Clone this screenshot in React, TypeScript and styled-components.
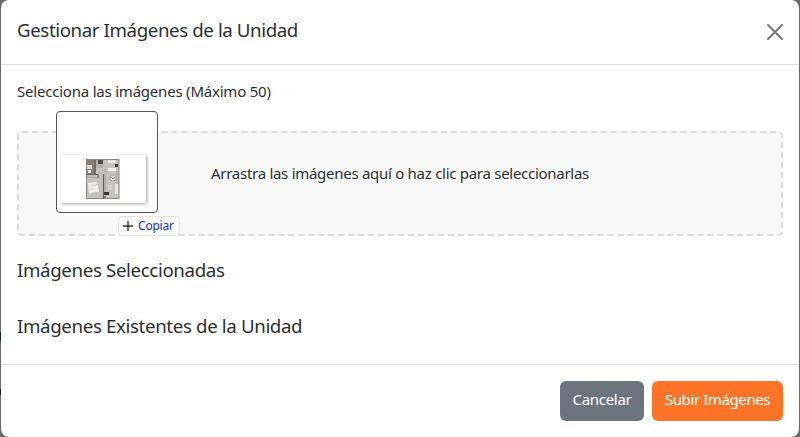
import React from "react";
import styled, { createGlobalStyle } from "styled-components";

const GlobalStyle = createGlobalStyle`
  * { box-sizing: border-box; }
  html, body { margin: 0; background: #69696b; overflow: hidden; }
  body { font-family: "Noto Sans", "Open Sans", sans-serif; color: #2b2f33; }
`;

const Backdrop = styled.div`
  width: 800px;
  height: 437px;
  padding: 0 1px;
  background:
    linear-gradient(#15262b, #15262b) 0 332px / 1px 9px no-repeat,
    linear-gradient(#1d1d1f, #1d1d1f) 0 389px / 1px 6px no-repeat,
    #69696b;
`;

const Modal = styled.section`
  display: flex;
  flex-direction: column;
  height: 437px;
  border-radius: 8px;
  background: #fff;
`;

const Header = styled.header`
  display: flex;
  align-items: center;
  justify-content: space-between;
  height: 65px;
  padding: 0 16px;
  border-bottom: 1px solid #dee2e6;
`;

const Text = styled.span<{ $size: number; $spacing?: number }>`
  font-size: ${(p) => p.$size}px;
  letter-spacing: ${(p) => p.$spacing ?? 0}px;
  line-height: 24px;
  white-space: nowrap;
`;

const Title = styled.h1`
  display: flex;
  margin: 0 0 4px;
  font-weight: 400;
`;

const CloseButton = styled.button`
  display: flex;
  padding: 0;
  border: 0;
  margin-right: -1px;
  background: none;
  color: #7a7a7a;
`;

const Body = styled.main`
  display: flex;
  flex-direction: column;
  flex: 1;
  padding: 14px 16px 0;
`;

const Label = styled.label`
  display: flex;
  height: 24px;
`;

const DropZone = styled.div`
  position: relative;
  display: flex;
  justify-content: center;
  height: 105px;
  margin-top: 28px;
  padding-top: 28px;
  border: 2px dashed #dcdcdc;
  border-radius: 5px;
  background: #f8f8f8;
`;

const DragPreview = styled.div`
  position: absolute;
  left: 37px;
  top: -22px;
  width: 102px;
  height: 102px;
  padding: 43px 0 0 4px;
  border: 1px solid #555;
  border-radius: 4px;
  background: #fff;
`;

const Thumbnail = styled.div`
  display: flex;
  width: 85px;
  height: 48px;
  padding: 4px 0 0 25px;
  background: #fff;
  box-shadow: 1px 1px 3px rgba(0, 0, 0, 0.35);
`;

const CopyHint = styled.div`
  position: absolute;
  left: 99px;
  top: 83px;
  display: flex;
  align-items: center;
  gap: 5px;
  width: 62px;
  height: 20px;
  padding-left: 4px;
  border: 1px solid #e4e4e4;
  border-radius: 4px;
  background: #fcfcfc;
  color: #1233b0;
`;

const SectionTitle = styled.h2`
  display: flex;
  margin: 22px 0 10px;
  font-weight: 400;
`;

const Footer = styled.footer`
  display: flex;
  justify-content: flex-end;
  gap: 8px;
  height: 73px;
  padding: 16px 16px 0;
  border-top: 1px solid #dee2e6;
`;

const Button = styled.button<{ $width: number; $color: string }>`
  display: flex;
  justify-content: center;
  width: ${(p) => p.$width}px;
  height: 40px;
  padding: 6px 0 0;
  border: 0;
  border-radius: 6px;
  background: ${(p) => p.$color};
  color: #fff;
  font-family: inherit;
`;

const CloseIcon = () => (
  <svg width="18" height="18" viewBox="0 0 18 18" fill="none" stroke="currentColor" strokeWidth="2" strokeLinecap="round">
    <path d="M2 2 16 16M16 2 2 16" />
  </svg>
);

const PlusIcon = () => (
  <svg width="10" height="10" viewBox="0 0 10 10" stroke="#333" strokeWidth="1.3">
    <path d="M5 0V10M0 5H10" />
  </svg>
);

const FloorPlan = () => (
  <svg width="34" height="41" viewBox="0 0 34 41">
    <rect x="0.5" y="0.5" width="32.5" height="39" fill="#c5c2be" stroke="#8b8783" />
    <rect x="1" y="1" width="9" height="14" fill="#8d7c70" />
    <rect x="1" y="6" width="5" height="4" fill="#ddd9d4" />
    <rect x="2" y="11" width="3" height="3" fill="#eceae7" />
    <rect x="10" y="1" width="7" height="8" fill="#b0afae" />
    <rect x="12" y="1" width="5" height="4" fill="#4a4c50" />
    <rect x="22" y="1" width="8" height="3" fill="#e7e6e3" />
    <rect x="22" y="9" width="8" height="3" fill="#f3f2f0" />
    <rect x="29" y="5" width="3" height="3" fill="#3a3a3b" />
    <path d="M9 1V15M1 15.5H12M12 15V19M17.5 15V40" fill="none" stroke="#66625f" strokeWidth="1.2" />
    <path d="M1 18 12 19M19 10V36M31 12V34" fill="none" stroke="#aaa6a1" />
    <path d="M2 24 11 23 13 33 3 34Z" fill="#eeedeb" />
    <path d="M6 25 8 27 11 25M4 29 7 31" fill="none" stroke="#bdbab6" strokeWidth="0.8" />
    <circle cx="27" cy="19" r="3" fill="#d7d4d0" stroke="#9f9b97" strokeWidth="0.7" />
    <path d="M25 18 27 20 29 18" fill="none" stroke="#918e89" strokeWidth="0.7" />
    <rect x="29" y="25" width="3" height="10" fill="#e9e7e4" />
    <rect x="22" y="26" width="4" height="5" fill="#d5d2ce" />
    <rect x="18" y="33" width="5" height="3" fill="#333435" />
    <rect x="18" y="37" width="2" height="2" fill="#807c46" />
  </svg>
);

export default function App() {
  return (
    <>
      <GlobalStyle />
      <Backdrop>
        <Modal role="dialog">
          <Header>
            <Title><Text $size={18.7} $spacing={-0.4}>Gestionar Imágenes de la Unidad</Text></Title>
            <CloseButton aria-label="Cerrar"><CloseIcon /></CloseButton>
          </Header>
          <Body>
            <Label><Text $size={15} $spacing={-0.21}>Selecciona las imágenes (Máximo 50)</Text></Label>
            <DropZone>
              <Text $size={15} $spacing={-0.28}>Arrastra las imágenes aquí o haz clic para seleccionarlas</Text>
              <DragPreview><Thumbnail><FloorPlan /></Thumbnail></DragPreview>
              <CopyHint><PlusIcon /><Text $size={12} $spacing={-0.2}>Copiar</Text></CopyHint>
            </DropZone>
            <SectionTitle><Text $size={18.7} $spacing={-0.36}>Imágenes Seleccionadas</Text></SectionTitle>
            <SectionTitle><Text $size={18.7} $spacing={-0.36}>Imágenes Existentes de la Unidad</Text></SectionTitle>
          </Body>
          <Footer>
            <Button $width={84} $color="#6c757d"><Text $size={15} $spacing={-0.3}>Cancelar</Text></Button>
            <Button $width={131} $color="#fd7428"><Text $size={15} $spacing={-0.4}>Subir Imágenes</Text></Button>
          </Footer>
        </Modal>
      </Backdrop>
    </>
  );
}
